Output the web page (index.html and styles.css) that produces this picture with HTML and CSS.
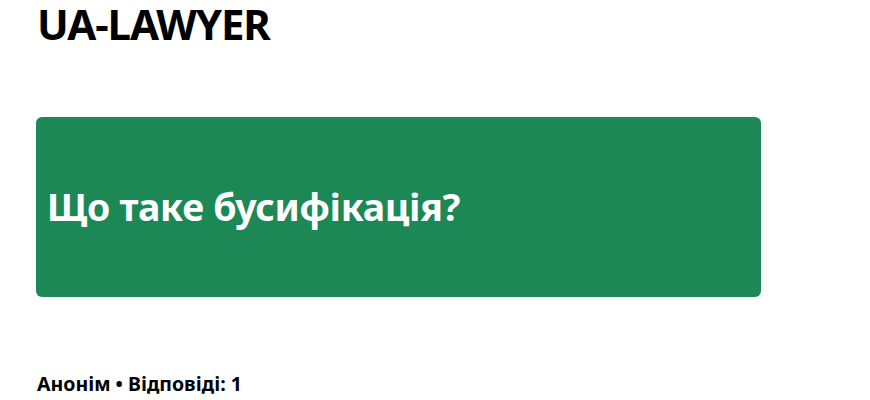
FILE: index.html
```html
<!DOCTYPE html>
<html lang="uk">
<head>
<meta charset="utf-8">
<title>UA-LAWYER</title>
<link rel="stylesheet" href="styles.css">
</head>
<body>
<div class="page">
  <header class="site-header">
    <h1 class="logo">UA-LAWYER</h1>
  </header>
  <main class="content">
    <section class="question-card">
      <h2 class="question-title">Що таке бусифікація?</h2>
    </section>
    <p class="meta">Анонім • Відповіді: 1</p>
  </main>
</div>
</body>
</html>
```
FILE: styles.css
```css
html, body {
  margin: 0;
  padding: 0;
  background: #ffffff;
}
body {
  font-family: "Noto Sans", "Open Sans", sans-serif;
  color: #000000;
}
.page {
  padding: 0 36px;
  width: 725px;
}
.site-header {
  padding-top: 0;
}
.logo {
  margin: -5px 0 0;
  font-size: 42px;
  line-height: 58px;
  font-weight: 700;
  letter-spacing: -1.1px;
  padding-left: 1px;
}
.content {
  padding-top: 64px;
}
.question-card {
  background: #1b8855;
  border-radius: 6px;
  height: 180px;
  display: flex;
  align-items: center;
  padding: 0 11px;
  box-sizing: border-box;
}
.question-title {
  margin: 0;
  color: #ffffff;
  font-size: 37.5px;
  line-height: 52px;
  font-weight: 700;
  letter-spacing: -0.3px;
}
.meta {
  margin: 74px 0 0;
  padding-left: 1px;
  font-size: 19.5px;
  font-weight: 700;
  line-height: 26px;
}
```
